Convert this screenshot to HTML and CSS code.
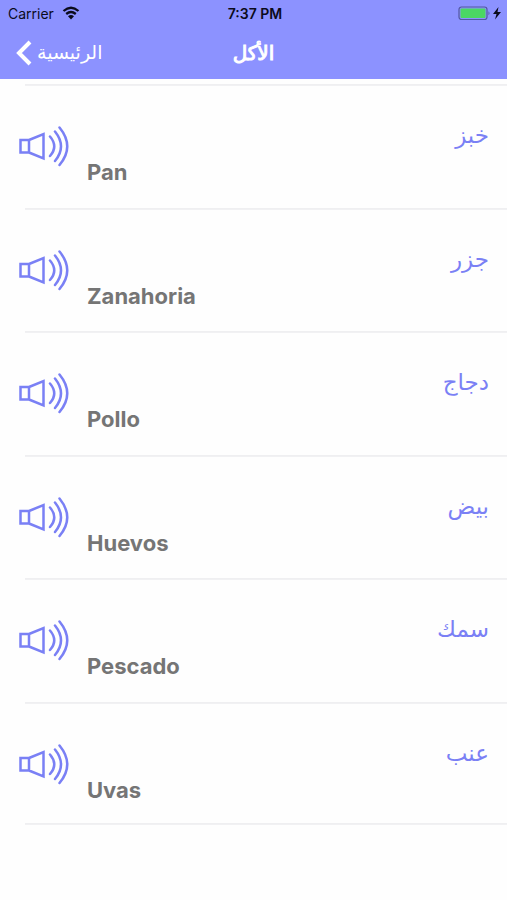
FILE: index.html
```html
<!DOCTYPE html>
<html lang="ar">
<head>
<meta charset="utf-8">
<meta name="viewport" content="width=device-width, initial-scale=1">
<title>الأكل</title>
<link rel="stylesheet" href="styles.css">
</head>
<body>
<svg class="defs" aria-hidden="true">
  <symbol id="speaker" viewBox="0 0 50 42">
    <path d="M1.500 15H10V27.500H1.500ZM10 15L24.500 9V33.500L10 27.500"/>
    <path d="M31 11.500Q39.500 21.500 31 31M36 6.500Q48 21.500 36 36M40.500 2.500Q56 21.500 40.500 40"/>
  </symbol>
</svg>
<header class="top">
  <div class="status">
    <div class="carrier">
      <span>Carrier</span>
      <svg class="wifi" viewBox="0 0 18 14" aria-hidden="true">
        <path d="M1.500 5Q9 -1.500 16.500 5M4.200 8Q9 4 13.800 8" fill="none" stroke="#0b0b1c" stroke-width="2.300"/>
        <path d="M6 10.300Q9 7.800 12 10.300L9 13.500Z" fill="#0b0b1c"/>
      </svg>
    </div>
    <span class="time">7:37 PM</span>
    <svg class="battery" viewBox="0 0 44 16" aria-hidden="true">
      <rect x="1" y="2" width="28" height="12.500" rx="2.500" fill="none" stroke="#5358a0" stroke-width="1.200"/>
      <rect x="2.500" y="3.500" width="25" height="9.500" rx="1" fill="#4bd763"/>
      <path d="M30.500 6.300Q32.500 8.200 30.500 10.200Z" fill="#5358a0"/>
      <path d="M40.500 2L35 9H38.500L37 14.500L43 7H39.500Z" fill="#0b0b1c"/>
    </svg>
  </div>
  <nav class="nav">
    <a class="back" href="#">
      <svg class="chevron" viewBox="0 0 16 26" aria-hidden="true"><path d="M14 2L3 13L14 24"/></svg>
      <span>الرئيسية</span>
    </a>
    <h1 class="title">الأكل</h1>
  </nav>
</header>
<main>
  <ul class="words">
    <li class="word"><button class="play" aria-label="Pan"><svg><use href="#speaker"/></svg></button><span class="spanish" lang="es">Pan</span><span class="arabic" dir="rtl">خبز</span></li>
    <li class="word"><button class="play" aria-label="Zanahoria"><svg><use href="#speaker"/></svg></button><span class="spanish" lang="es">Zanahoria</span><span class="arabic" dir="rtl">جزر</span></li>
    <li class="word"><button class="play" aria-label="Pollo"><svg><use href="#speaker"/></svg></button><span class="spanish" lang="es">Pollo</span><span class="arabic" dir="rtl">دجاج</span></li>
    <li class="word"><button class="play" aria-label="Huevos"><svg><use href="#speaker"/></svg></button><span class="spanish" lang="es">Huevos</span><span class="arabic" dir="rtl">بيض</span></li>
    <li class="word"><button class="play" aria-label="Pescado"><svg><use href="#speaker"/></svg></button><span class="spanish" lang="es">Pescado</span><span class="arabic" dir="rtl">سمك</span></li>
    <li class="word"><button class="play" aria-label="Uvas"><svg><use href="#speaker"/></svg></button><span class="spanish" lang="es">Uvas</span><span class="arabic" dir="rtl">عنب</span></li>
  </ul>
</main>
</body>
</html>
```
FILE: styles.css
```css
* {
  box-sizing: border-box;
}

body {
  margin: 0;
  background: #fefefe;
  font-family: Inter, "DejaVu Sans", sans-serif;
}

.defs {
  display: none;
}

.top {
  background: #8c92ff;
  color: #fff;
}

.status,
.nav {
  display: grid;
  grid-template-columns: 1fr auto 1fr;
  align-items: center;
}

.status {
  height: 26px;
  padding: 0 5px 0 8px;
  font-size: 14px;
  color: #0b0b1c;
}

.carrier {
  display: flex;
  align-items: center;
  gap: 8px;
}

.wifi {
  width: 18px;
  height: 14px;
}

.time {
  font-weight: 600;
}

.battery {
  width: 44px;
  height: 16px;
  justify-self: end;
}

.nav {
  height: 53px;
  padding: 0 16px;
}

.back {
  display: flex;
  align-items: center;
  gap: 5px;
  color: #fff;
  font-size: 19px;
  text-decoration: none;
}

.chevron {
  width: 16px;
  height: 26px;
  fill: none;
  stroke: #fff;
  stroke-width: 4;
}

.title {
  margin: 0;
  font-size: 20px;
  font-weight: 400;
  line-height: 24px;
  -webkit-text-stroke: 1px #fff;
}

.words {
  display: grid;
  grid-auto-rows: 1fr;
  min-height: 741px;
  margin: 5px 0 0;
  padding: 0;
  list-style: none;
}

.word {
  display: grid;
  grid-template-columns: 50px 1fr auto;
  column-gap: 18px;
  align-items: start;
  padding: 0 18px 0 19px;
  background: linear-gradient(#eeeef0, #f2f2f4) 25px 0 / 100% 2px no-repeat;
}

.word:last-child {
  background:
    linear-gradient(#eeeef0, #f2f2f4) 25px 0 / 100% 2px no-repeat,
    linear-gradient(#eeeef0, #f2f2f4) 25px 100% / 100% 2px no-repeat;
}

.play {
  width: 50px;
  height: 42px;
  margin-top: 41px;
  padding: 0;
  border: 0;
  background: none;
}

.play svg {
  display: block;
  width: 50px;
  height: 42px;
  fill: none;
  stroke: #7a80f5;
  stroke-width: 2.500;
  stroke-linecap: round;
}

.spanish {
  margin-top: 74px;
  font-family: Inter, "Liberation Sans", sans-serif;
  font-size: 22px;
  font-weight: 700;
  line-height: 28px;
  color: #757575;
}

.arabic {
  margin-top: 37px;
  font-family: "DejaVu Sans", sans-serif;
  font-size: 23px;
  line-height: 28px;
  color: #7a80f5;
}
```
